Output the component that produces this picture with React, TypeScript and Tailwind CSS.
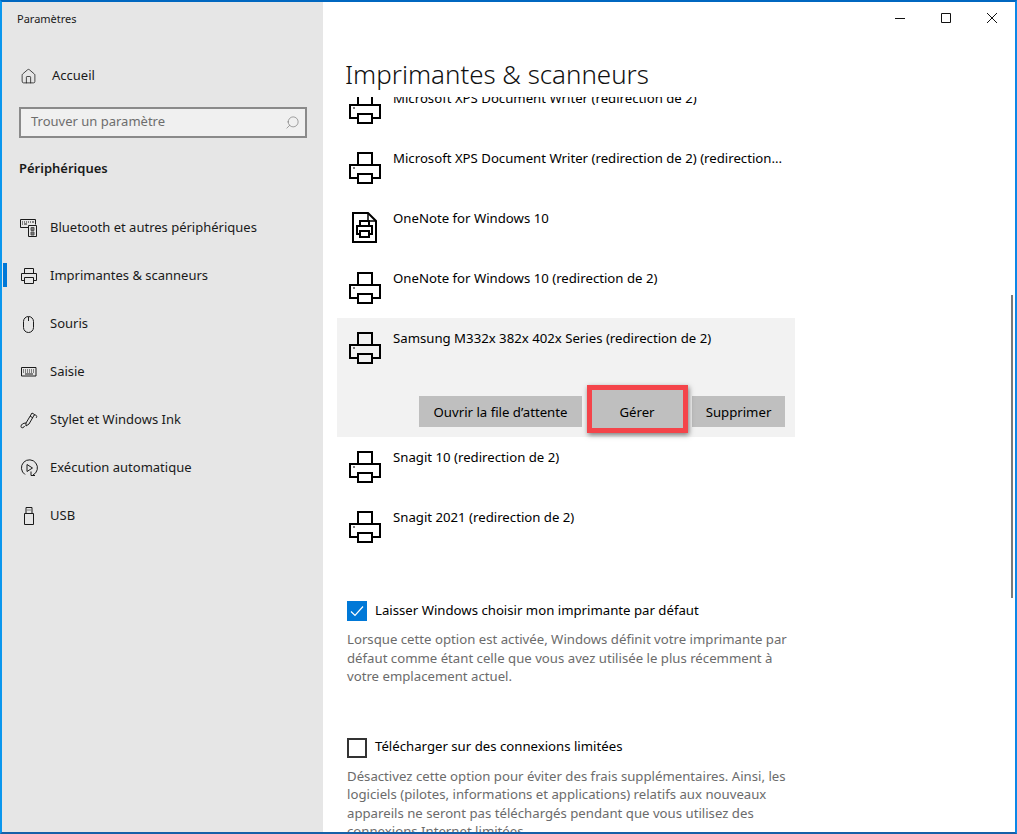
import React from 'react';
import { Home, Search } from 'lucide-react';

const PrinterIcon = () => (
  <svg width="34" height="34" viewBox="0 0 34 34" fill="none" stroke="#000" strokeWidth="2" className="shrink-0">
    <path d="M10 13V2h14v11" />
    <path d="M9 27H2V14h30v13h-7" />
    <path d="M10 23h14v9H10z" />
    <path d="M5 17h2" strokeWidth="1" />
  </svg>
);

const NotePrinterIcon = () => (
  <svg width="34" height="34" viewBox="0 0 34 34" fill="none" className="shrink-0" stroke="#000">
    <path d="M5 2h15l8 8v21H5z" strokeWidth="2" />
    <path d="M20 2v8h8" strokeWidth="1.5" />
    <path d="M12 15v-5h9v5M12 23H9v-8h15v8h-3M12 20h9v6h-9z" strokeWidth="2" />
  </svg>
);

const SmallPrinter = () => (
  <svg width="18" height="18" viewBox="0 0 18 18" fill="none" stroke="#1a1a1a" strokeWidth="1">
    <path d="M4.5 6.5v-5h9v5M4.5 13.5h-3v-7h15v7h-3M4.5 10.5h9v6h-9z" />
  </svg>
);

const BluetoothIcon = () => (
  <svg width="18" height="18" viewBox="0 0 18 18" fill="none" stroke="#1a1a1a" strokeWidth="1">
    <path d="M8 8.5H.5v-8h15v5" />
    <path d="M2 3h1M4 3h1M6 3h1M8 3h1M10 3h1M12 3h2M2 5h1M4 5h3" />
    <path d="M8.5 6.5h8v11h-8z" />
    <path d="M11 8.5h3v3h-3zM11 13h3v3h-3z" fill="#777" stroke="#555" />
  </svg>
);

const MouseIcon = () => (
  <svg width="12" height="17" viewBox="0 0 12 17" fill="none" stroke="#1a1a1a" strokeWidth="1">
    <path d="M.5 5.5a5 5 0 0 1 10 0v6a5 5 0 0 1-10 0z" />
    <path d="M5.5 1v4" />
  </svg>
);

const KeyboardIcon = () => (
  <svg width="16" height="10" viewBox="0 0 16 10" fill="none" stroke="#1a1a1a" strokeWidth="1">
    <path d="M.5.5h14.5v8.5H.5z" />
    <path d="M2 3h12M2 5h12" strokeDasharray="1 1" />
    <path d="M4 7h8" />
  </svg>
);

const PenIcon = () => (
  <svg width="18" height="18" viewBox="0 0 18 18" fill="none" stroke="#1a1a1a" strokeWidth="1">
    <path d="M6 12 12 2l2.5 1.5L9 13l-3 2z" />
    <path d="M10 5l3 2" />
    <path d="M14 4c2.5-.5 3.5 1.500 2 3" />
    <path d="M6 12c-3 0-5 1.500-5 3.500s3 1.500 3.500-.5" />
  </svg>
);

const AutoplayIcon = () => (
  <svg width="18" height="18" viewBox="0 0 18 18" fill="none" stroke="#1a1a1a" strokeWidth="1">
    <path d="M5 15.500A8 8 0 1 1 13 16" />
    <path d="M7 5.500v7l5.500-3.500z" />
    <path d="M11 12.500v4h4" />
  </svg>
);

const UsbIcon = () => (
  <svg width="11" height="18" viewBox="0 0 11 18" fill="none" stroke="#1a1a1a" strokeWidth="1">
    <path d="M.5 6.500h9v11h-9zM2 6.500v-6h6v6" />
    <path d="M3.500 3h1M5.500 3h1" />
  </svg>
);

const NavItem = ({ icon, label, active }: { icon: React.ReactNode; label: string; active?: boolean }) => (
  <div className="relative flex h-12 items-center">
    {active && <div className="absolute left-[1px] top-[11px] h-6 w-1 bg-[#0078d7]" />}
    <div className="flex w-[48px] shrink-0 justify-center pl-[6px]">{icon}</div>
    <span className="text-[13px] text-[#1a1a1a]">{label}</span>
  </div>
);

const devices = [
  { name: 'Microsoft XPS Document Writer (redirection de 2) (redirection...' },
  { name: 'OneNote for Windows 10', note: true },
  { name: 'OneNote for Windows 10 (redirection de 2)' },
];

const DeviceRow = ({ name, note }: { name: string; note?: boolean }) => (
  <div className="flex h-[60px] pl-[11px] pt-[13px]">
    {note ? <NotePrinterIcon /> : <PrinterIcon />}
    <span className="-mt-[2px] ml-[11px] h-[18px] whitespace-nowrap text-[13.2px] leading-[18px] text-black">{name}</span>
  </div>
);

const App = () => (
  <div className="relative flex h-[834px] w-[1017px] overflow-hidden border-2 border-b-[#1560a8] border-l-[#0a97ee] border-r-[#0a88e8] border-t-[#0067c0] bg-white font-['Noto_Sans',sans-serif]">
    <aside className="w-[321px] shrink-0 bg-[#e6e6e6]">
      <div className="pl-[15px] pt-[9px] text-[11px] leading-4 text-[#1a1a1a]">Paramètres</div>
      <div className="mt-[25px] flex h-12 items-center">
        <div className="flex w-[48px] shrink-0 justify-center pl-[5px]"><Home size={17} strokeWidth={1.1} color="#1a1a1a" /></div>
        <span className="ml-[2px] text-[13px] text-[#1a1a1a]">Accueil</span>
      </div>
      <div className="ml-[17px] mr-[16px] mt-[7px] flex h-[31px] items-center justify-between border-2 border-[#8a8a8a] bg-[#f0f0f0] pb-[1px] pl-[10px] pr-[5px]">
        <span className="text-[13px] text-[#6d6d6d]">Trouver un paramètre</span>
        <Search size={15} strokeWidth={1} color="#6d6d6d" className="-scale-x-100" />
      </div>
      <div className="pl-[17px] pt-[20px] text-[13px] font-semibold leading-5 text-[#1a1a1a]">Périphériques</div>
      <nav className="mt-[26px]">
        <NavItem icon={<BluetoothIcon />} label="Bluetooth et autres périphériques" />
        <NavItem icon={<SmallPrinter />} label="Imprimantes & scanneurs" active />
        <NavItem icon={<MouseIcon />} label="Souris" />
        <NavItem icon={<KeyboardIcon />} label="Saisie" />
        <NavItem icon={<PenIcon />} label="Stylet et Windows Ink" />
        <NavItem icon={<AutoplayIcon />} label="Exécution automatique" />
        <NavItem icon={<UsbIcon />} label="USB" />
      </nav>
    </aside>

    <main className="relative flex min-w-0 flex-1 flex-col">
      <h1 className="pb-[4px] pl-[22px] pt-[53px] text-[25.9px] font-light leading-[38px] text-[#111]">Imprimantes &amp; scanneurs</h1>
      <div className="min-h-0 flex-1 overflow-hidden">
        <div className="-mt-[19px] ml-[14px] w-[458px]">
          <DeviceRow name="Microsoft XPS Document Writer (redirection de 2)" />
          {devices.map((d) => (
            <DeviceRow key={d.name} name={d.name} note={d.note} />
          ))}
          <div className="bg-[#f2f2f2] pb-[10px]">
            <div className="flex h-[78px] pl-[11px] pt-[13px]">
              <PrinterIcon />
              <span className="-mt-[2px] ml-[11px] h-[18px] text-[13.2px] leading-[18px] text-black">Samsung M332x 382x 402x Series (redirection de 2)</span>
            </div>
            <div className="flex justify-end gap-[10px] pr-[10px]">
              <button className="h-[31px] w-[163px] bg-[#bfbfbf] pt-[3px] text-[13.2px] text-black">Ouvrir la file d’attente</button>
              <div className="relative h-[31px] w-[90px]">
                <div className="absolute -bottom-[6px] -left-[5px] -right-[6px] -top-[11px] border-[5px] border-[#f4444a] bg-[#bfbfbf] shadow-[1px_2px_5px_rgba(0,0,0,0.5)]" />
                <button className="relative h-[31px] w-[90px] pt-[3px] text-[13.2px] text-black">Gérer</button>
              </div>
              <button className="h-[31px] w-[93px] bg-[#bfbfbf] pt-[3px] text-[13.2px] text-black">Supprimer</button>
            </div>
          </div>
          <DeviceRow name="Snagit 10 (redirection de 2)" />
          <DeviceRow name="Snagit 2021 (redirection de 2)" />
        </div>
        <div className="ml-[24px] mt-[44px] w-[445px]">
          <label className="flex items-center gap-2">
            <span className="flex h-5 w-5 items-center justify-center bg-[#0078d7]">
              <svg width="14" height="14" viewBox="0 0 14 14" fill="none" stroke="#fff" strokeWidth="1.2"><path d="M1 7.500 5 11.500 13 2.500" /></svg>
            </span>
            <span className="-mt-[1px] text-[13.2px] text-black">Laisser Windows choisir mon imprimante par défaut</span>
          </label>
          <p className="mt-[9px] text-[13.2px] leading-[18.5px] text-[#6b6b6b]">Lorsque cette option est activée, Windows définit votre imprimante par défaut comme étant celle que vous avez utilisée le plus récemment à votre emplacement actuel.</p>
          <label className="mt-[52px] flex items-center gap-2">
            <span className="h-5 w-5 border-2 border-[#333]" />
            <span className="-mt-[1px] text-[13.2px] text-black">Télécharger sur des connexions limitées</span>
          </label>
          <p className="mt-[9px] text-[13.2px] leading-[18.5px] text-[#6b6b6b]">Désactivez cette option pour éviter des frais supplémentaires. Ainsi, les logiciels (pilotes, informations et applications) relatifs aux nouveaux appareils ne seront pas téléchargés pendant que vous utilisez des connexions Internet limitées.</p>
        </div>
      </div>
      <div className="absolute right-[2px] top-[293px] h-[303px] w-[2px] bg-[#7a7a7a]" />
    </main>

    <div className="absolute right-[13px] top-[11px] flex items-center gap-[36px] pr-[5px]">
      <svg width="10" height="10" viewBox="0 0 10 10" stroke="#111" strokeWidth="1"><path d="M0 5.500h10" /></svg>
      <svg width="10" height="10" viewBox="0 0 10 10" stroke="#111" fill="none" strokeWidth="1"><path d="M.5.5h9v9h-9z" /></svg>
      <svg width="10" height="10" viewBox="0 0 10 10" stroke="#111" strokeWidth="1"><path d="M0 0l10 10M10 0 0 10" /></svg>
    </div>
  </div>
);

export default App;
